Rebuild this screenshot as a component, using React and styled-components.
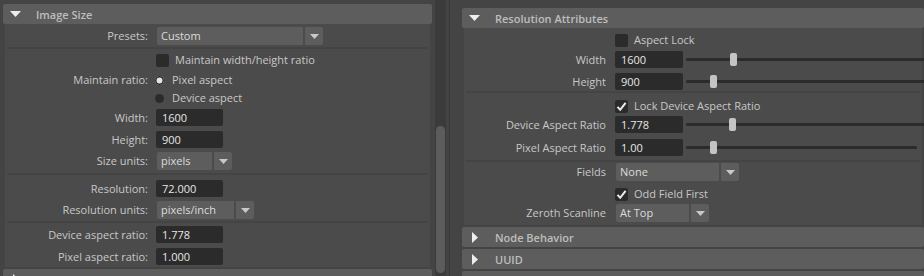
import React from 'react';
import styled, { createGlobalStyle } from 'styled-components';

const GlobalStyle = createGlobalStyle`
  * { box-sizing: border-box; }
  html, body { margin: 0; padding: 0; background: #444444; }
  body {
    font-family: "Open Sans", Roboto, "Liberation Sans", sans-serif;
    font-size: 11px;
    color: #c8c8c8;
  }
`;

const Window = styled.div`
  display: flex;
  width: 924px;
  height: 276px;
  overflow: hidden;
  background: #444444;
`;

const LeftPane = styled.div`
  width: 435px;
  flex-shrink: 0;
  padding: 4px 3px 0 3px;
  display: flex;
  flex-direction: column;
`;

const Scrollbar = styled.div`
  width: 11px;
  flex-shrink: 0;
  background: #3b3b3b;
  padding: 126px 1px 3px 1px;
  display: flex;
  flex-direction: column;
`;

const Thumb = styled.div`
  flex: 1;
  background: #5c5c5c;
  border-radius: 5px;
`;

const Splitter = styled.div`
  width: 9px;
  flex-shrink: 0;
  padding-left: 3px;
  display: flex;
`;

const SplitLine = styled.div`
  width: 1px;
  background: #383838;
`;

const RightPane = styled.div`
  flex: 1;
  min-width: 0;
  overflow: hidden;
  padding: 8px 0 0 7px;
  display: flex;
  flex-direction: column;
`;

const Header = styled.div`
  height: 20px;
  flex-shrink: 0;
  margin-top: ${p => p.$mt || 0}px;
  display: flex;
  align-items: center;
  background: #5d5d5d;
  border-radius: 2px;
  padding-left: 7px;
  color: #bdbdbd;
  font-weight: 600;
  white-space: nowrap;
`;

const Caret = styled.span`
  width: 26px;
  flex-shrink: 0;
  display: flex;
  align-items: center;
  padding-left: ${p => (p.$open ? 0 : 3)}px;
`;

const Body = styled.div`
  --label: ${p => p.$label}px;
  --gap: ${p => p.$gap}px;
  margin: 0 2px;
  padding-bottom: ${p => p.$pb}px;
  background: #4b4b4b;
  display: flex;
  flex-direction: column;
  flex-shrink: 0;
`;

const Row = styled.div`
  flex-shrink: 0;
  display: grid;
  grid-template-columns: var(--label) max-content;
  column-gap: var(--gap);
  align-items: center;
  height: ${p => p.$h}px;
  margin-top: ${p => p.$mt}px;
`;

const Label = styled.span`
  text-align: right;
  white-space: nowrap;
  line-height: 14px;
  color: #c8c8c8;
`;

const Sep = styled.div`
  flex-shrink: 0;
  height: 2px;
  margin: ${p => p.$mt}px 2px 0 2px;
  background: #444444;
`;

const Field = styled.div`
  width: ${p => p.$w || 68}px;
  height: 17px;
  line-height: 17px;
  padding-left: 6px;
  background: #2b2b2b;
  border-radius: 2px;
  color: #e6e6e6;
`;

const Combo = styled.div`
  display: flex;
  gap: 2px;
  margin-left: 1px;
  height: 18px;
`;

const ComboValue = styled.div`
  width: ${p => p.$w}px;
  line-height: 18px;
  padding-left: 4px;
  background: #5d5d5d;
  border-radius: 2px 0 0 2px;
  color: #dcdcdc;
  white-space: nowrap;
`;

const ComboButton = styled.div`
  width: 18px;
  background: #5d5d5d;
  border-radius: 0 2px 2px 0;
  display: flex;
  align-items: center;
  justify-content: center;
`;

const Toggle = styled.div`
  display: flex;
  align-items: center;
  gap: ${p => p.$gap}px;
  margin-left: ${p => p.$ml || 0}px;
  white-space: nowrap;
  line-height: 14px;
`;

const Box = styled.div`
  width: 13px;
  height: 13px;
  background: #2b2b2b;
  border-radius: 2px;
  display: flex;
  align-items: center;
  justify-content: center;
`;

const RadioDot = styled.div`
  width: 9px;
  height: 9px;
  border-radius: 50%;
  background: ${p => (p.$on ? '#e4e4e4' : '#2b2b2b')};
  box-shadow: ${p => (p.$on ? 'inset 0 0 0 1.5px #2b2b2b' : 'none')};
`;

const SliderGroup = styled.div`
  display: flex;
  align-items: center;
  gap: 3px;
`;

const Track = styled.div`
  position: relative;
  width: ${p => p.$w}px;
  height: 3px;
  background: #2b2b2b;
  border-radius: 2px;
`;

const Knob = styled.div`
  position: absolute;
  top: -5px;
  left: ${p => p.$pos}px;
  width: 7px;
  height: 13px;
  background: #c4c4c4;
  border-radius: 2px;
`;

const DownTri = ({ w = 11, h = 6, color = '#eeeeee' }) => (
  <svg width={w} height={h} viewBox={`0 0 ${w} ${h}`}>
    <polygon points={`0,0 ${w},0 ${w / 2},${h}`} fill={color} />
  </svg>
);

const RightTri = () => (
  <svg width="6" height="11" viewBox="0 0 6 11">
    <polygon points="0,0 6,5.5 0,11" fill="#eeeeee" />
  </svg>
);

const SectionHeader = ({ title, open, mt }) => (
  <Header $mt={mt}>
    <Caret $open={open}>{open ? <DownTri /> : <RightTri />}</Caret>
    {title}
  </Header>
);

const Dropdown = ({ w, value }) => (
  <Combo>
    <ComboValue $w={w}>{value}</ComboValue>
    <ComboButton>
      <DownTri w={9} h={5} color="#c8c8c8" />
    </ComboButton>
  </Combo>
);

const Check = ({ label, checked }) => (
  <Toggle $gap={6}>
    <Box>
      {checked && (
        <svg width="11" height="11" viewBox="0 0 11 11">
          <polyline points="1.5,5.8 4.2,8.8 9.6,1.8" fill="none" stroke="#ececec" strokeWidth="2" />
        </svg>
      )}
    </Box>
    {label}
  </Toggle>
);

const Radio = ({ label, checked }) => (
  <Toggle $gap={8} $ml={-1}>
    <RadioDot $on={checked} />
    {label}
  </Toggle>
);

const Slider = ({ value, track, pos }) => (
  <SliderGroup>
    <Field>{value}</Field>
    <Track $w={track}>
      <Knob $pos={pos} />
    </Track>
  </SliderGroup>
);

export default function App() {
  return (
    <>
      <GlobalStyle />
      <Window>
        <LeftPane>
          <SectionHeader title="Image Size" open />
          <Body $label={143} $gap={8} $pb={2}>
            <Row $mt={3} $h={18}><Label>Presets:</Label><Dropdown w={146} value="Custom" /></Row>
            <Sep $mt={2} />
            <Row $mt={4} $h={13}><span /><Check label="Maintain width/height ratio" /></Row>
            <Row $mt={7} $h={14}><Label>Maintain ratio:</Label><Radio checked label="Pixel aspect" /></Row>
            <Row $mt={4} $h={14}><span /><Radio label="Device aspect" /></Row>
            <Row $mt={4} $h={17}><Label>Width:</Label><Field $w={67}>1600</Field></Row>
            <Row $mt={5} $h={17}><Label>Height:</Label><Field $w={67}>900</Field></Row>
            <Row $mt={4} $h={18}><Label>Size units:</Label><Dropdown w={55} value="pixels" /></Row>
            <Sep $mt={3} />
            <Row $mt={5} $h={17}><Label>Resolution:</Label><Field $w={67}>72.000</Field></Row>
            <Row $mt={4} $h={18}><Label>Resolution units:</Label><Dropdown w={77} value="pixels/inch" /></Row>
            <Sep $mt={2} />
            <Row $mt={3} $h={17}><Label>Device aspect ratio:</Label><Field $w={67}>1.778</Field></Row>
            <Row $mt={5} $h={17}><Label>Pixel aspect ratio:</Label><Field $w={67}>1.000</Field></Row>
          </Body>
          <SectionHeader mt={2} />
        </LeftPane>
        <Scrollbar><Thumb /></Scrollbar>
        <Splitter><SplitLine /></Splitter>
        <RightPane>
          <SectionHeader title="Resolution Attributes" open />
          <Body $label={142} $gap={9} $pb={3}>
            <Row $mt={5} $h={13}><span /><Check label="Aspect Lock" /></Row>
            <Row $mt={5} $h={17}><Label>Width</Label><Slider value="1600" track={320} pos={44} /></Row>
            <Row $mt={5} $h={17}><Label>Height</Label><Slider value="900" track={320} pos={24} /></Row>
            <Sep $mt={1} />
            <Row $mt={6} $h={13}><span /><Check checked label="Lock Device Aspect Ratio" /></Row>
            <Row $mt={4} $h={17}><Label>Device Aspect Ratio</Label><Slider value="1.778" track={320} pos={43} /></Row>
            <Row $mt={6} $h={17}><Label>Pixel Aspect Ratio</Label><Slider value="1.00" track={231} pos={24} /></Row>
            <Sep $mt={4} />
            <Row $mt={1} $h={18}><Label>Fields</Label><Dropdown w={103} value="None" /></Row>
            <Row $mt={6} $h={13}><span /><Check checked label="Odd Field First" /></Row>
            <Row $mt={4} $h={18}><Label>Zeroth Scanline</Label><Dropdown w={73} value="At Top" /></Row>
          </Body>
          <SectionHeader title="Node Behavior" mt={2} />
          <SectionHeader title="UUID" mt={2} />
          <SectionHeader mt={2} />
        </RightPane>
      </Window>
    </>
  );
}
